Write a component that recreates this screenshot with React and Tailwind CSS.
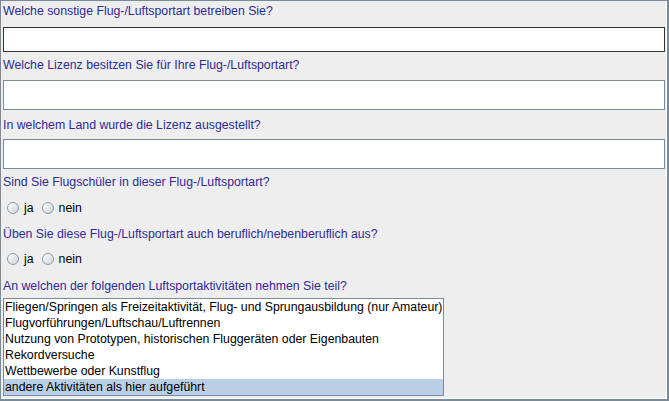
import { useState } from "react";

const activities = [
  "Fliegen/Springen als Freizeitaktivität, Flug- und Sprungausbildung (nur Amateur)",
  "Flugvorführungen/Luftschau/Luftrennen",
  "Nutzung von Prototypen, historischen Fluggeräten oder Eigenbauten",
  "Rekordversuche",
  "Wettbewerbe oder Kunstflug",
  "andere Aktivitäten als hier aufgeführt",
];

function Label({ children, className = "" }) {
  return (
    <div className={`h-[15px] leading-[15px] text-[12.3px] text-[#2e2a96] ${className}`}>
      {children}
    </div>
  );
}

function Radio({ label, checked, onClick }) {
  return (
    <button onClick={onClick} className="flex items-center gap-[5px] text-[12.3px] leading-[16px] text-black">
      <span className="w-[12px] h-[12px] rounded-full border border-[#8e9aa8] bg-gradient-to-br from-white to-[#c9d3de] flex items-center justify-center">
        {checked && <span className="w-[4px] h-[4px] rounded-full bg-black" />}
      </span>
      {label}
    </button>
  );
}

function RadioRow({ className = "" }) {
  const [value, setValue] = useState(null);
  return (
    <div className={`flex items-center gap-[8px] pl-[4px] h-[16px] ${className}`}>
      <Radio label="ja" checked={value === "ja"} onClick={() => setValue("ja")} />
      <Radio label="nein" checked={value === "nein"} onClick={() => setValue("nein")} />
    </div>
  );
}

export default function App() {
  const [selected, setSelected] = useState(5);

  return (
    <div
      className="w-[669px] h-[401px] bg-[#eeeeee] border-l border-t border-r-2 border-b-2 border-[#7a8a99] overflow-hidden"
      style={{ fontFamily: '"Liberation Sans", Arial, sans-serif' }}
    >
      <div className="h-full border-r border-b border-white pl-[2px] pr-[1px] pt-[3px]">
        <Label>Welche sonstige Flug-/Luftsportart betreiben Sie?</Label>
        <input className="mt-[8px] block w-full h-[25px] bg-white border border-[#333333] outline-none px-1 text-[12px]" />

        <Label className="mt-[6px]">Welche Lizenz besitzen Sie für Ihre Flug-/Luftsportart?</Label>
        <input className="mt-[7px] block w-full h-[30px] bg-white border border-[#7a8a99] outline-none px-1 text-[12px]" />

        <Label className="mt-[8px]">In welchem Land wurde die Lizenz ausgestellt?</Label>
        <input className="mt-[6px] block w-full h-[30px] bg-white border border-[#7a8a99] outline-none px-1 text-[12px]" />

        <Label className="mt-[6px]">Sind Sie Flugschüler in dieser Flug-/Luftsportart?</Label>
        <RadioRow className="mt-[10px]" />

        <Label className="mt-[11px]">Üben Sie diese Flug-/Luftsportart auch beruflich/nebenberuflich aus?</Label>
        <RadioRow className="mt-[9px]" />

        <Label className="mt-[12px]">An welchen der folgenden Luftsportaktivitäten nehmen Sie teil?</Label>
        <ul className="mt-[4px] w-[441px] border border-[#7a8a99] bg-white">
          {activities.map((a, i) => (
            <li
              key={a}
              onClick={() => setSelected(i)}
              className={`h-[16px] leading-[16px] text-[12.3px] text-black pl-[1px] whitespace-nowrap ${
                selected === i ? "bg-[#b8cfe5]" : ""
              }`}
            >
              {a}
            </li>
          ))}
        </ul>
      </div>
    </div>
  );
}
